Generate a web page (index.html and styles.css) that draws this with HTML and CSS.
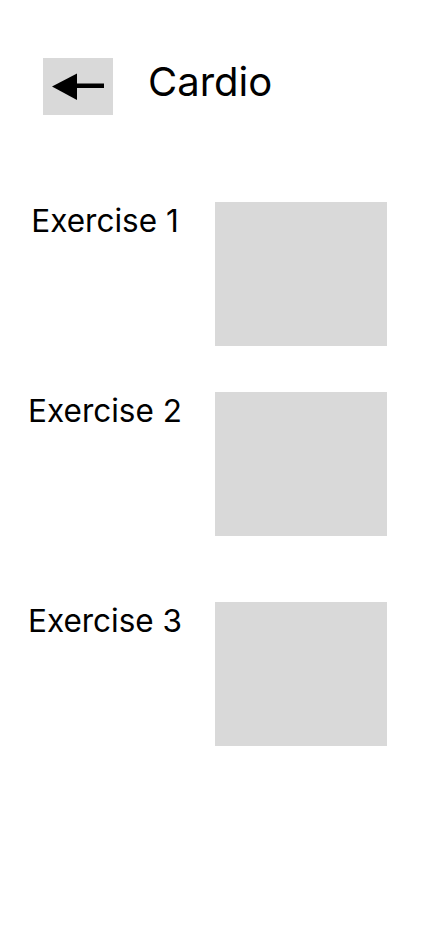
FILE: index.html
```html
<!DOCTYPE html>
<html>
<head>
<meta charset="utf-8">
<link rel="stylesheet" href="styles.css">
</head>
<body>
<div class="page">
  <header class="header">
    <button class="back" aria-label="Back">
      <svg width="54" height="30" viewBox="0 0 54 30">
        <polygon points="1,14.5 26,1.5 26,28" fill="#000"/>
        <rect x="25" y="11.5" width="28" height="4.5" fill="#000"/>
      </svg>
    </button>
    <h1 class="title">Cardio</h1>
  </header>
  <main class="list">
    <div class="row row1">
      <div class="label">Exercise 1</div>
      <div class="thumb"></div>
    </div>
    <div class="row row2">
      <div class="label">Exercise 2</div>
      <div class="thumb"></div>
    </div>
    <div class="row row3">
      <div class="label">Exercise 3</div>
      <div class="thumb"></div>
    </div>
  </main>
</div>
</body>
</html>
```
FILE: styles.css
```css
html, body {
  margin: 0;
  padding: 0;
  background: #fff;
}
body {
  font-family: Inter, "Noto Sans", sans-serif;
  color: #000;
}
.page {
  width: 430px;
  height: 932px;
}
.header {
  display: flex;
  align-items: flex-start;
  padding: 58px 0 0 43px;
}
.back {
  width: 70px;
  height: 57px;
  background: #d9d9d9;
  border: none;
  padding: 0;
  margin: 0;
  display: flex;
  align-items: center;
  justify-content: center;
}
.back svg {
  display: block;
  margin-top: 1px;
}
.title {
  margin: 0 0 0 35px;
  font-size: 40px;
  font-weight: 400;
  line-height: 47px;
}
.list {
  display: flex;
  flex-direction: column;
  padding-top: 87px;
}
.row {
  display: flex;
  align-items: flex-start;
}
.row2 { margin-top: 46px; }
.row3 { margin-top: 66px; }
.label {
  width: 210px;
  text-align: center;
  font-size: 31.5px;
  line-height: 37.5px;
}
.thumb {
  margin-left: 5px;
  width: 172px;
  height: 144px;
  background: #d9d9d9;
}
```
